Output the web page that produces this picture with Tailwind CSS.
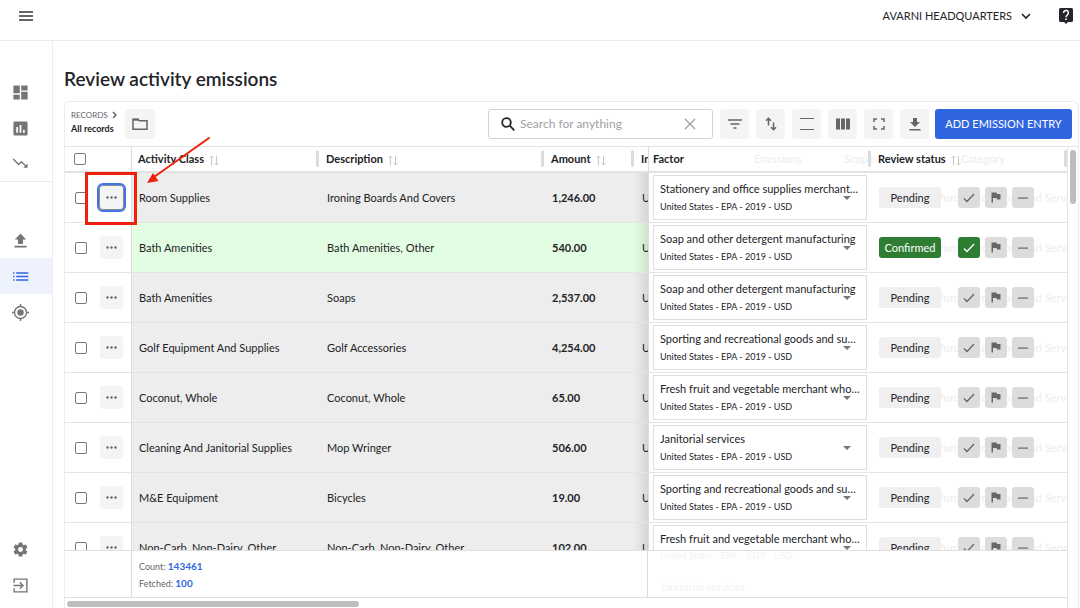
<!DOCTYPE html>
<html lang="en">
<head>
  <meta charset="UTF-8" />
  <title>Review activity emissions</title>
  <script src="https://cdn.jsdelivr.net/npm/@tailwindcss/browser@4"></script>
</head>
<body class="h-screen overflow-hidden flex flex-col bg-white text-[#222326] font-[Lato,'Liberation_Sans',sans-serif]">
  <header class="h-[41px] shrink-0 border-b border-[#ececec] flex items-start justify-between pl-[18px] pr-[6px]">
    <button aria-label="Menu" class="mt-[9px]">
      <svg width="16" height="14" viewBox="0 0 16 14" stroke="#333" stroke-width="1.6"><path d="M1 3h14M1 7h14M1 11h14" /></svg>
    </button>
    <div class="flex items-center mt-[7px]">
      <button class="flex items-center gap-2 text-[11px] leading-[18px]">
        AVARNI HEADQUARTERS
        <svg width="12" height="12" viewBox="0 0 12 12" fill="none" stroke="#222326" stroke-width="1.6"><path d="M2 4l4 4 4-4" /></svg>
      </button>
      <button aria-label="Help" class="ml-[26px]">
        <svg width="16" height="18" viewBox="0 0 16 18"><path d="M2.500 1h11a1.500 1.500 0 0 1 1.500 1.500v11a1.500 1.500 0 0 1-1.500 1.500H10l-2 2-2-2H2.500A1.500 1.500 0 0 1 1 13.500v-11A1.500 1.500 0 0 1 2.500 1z" fill="#26262c" /><path d="M5.600 5.900a2.400 2.400 0 1 1 4.300 1.400C9 8.300 8 8.700 8 10.300" fill="none" stroke="#fff" stroke-width="1.500" /><path d="M7.200 11.600h1.600v1.500H7.200z" fill="#fff" /></svg>
      </button>
    </div>
  </header>

  <div class="flex flex-1 min-h-0">
    <nav class="w-[53px] shrink-0 border-r border-[#ececec] flex flex-col pt-[33px] pb-[5px] text-[#757575]">
      <a href="#" aria-label="Dashboard" class="h-9 pl-3 flex items-center">
        <svg width="17" height="17" viewBox="0 0 24 24" fill="currentColor"><path d="M2 2h9v11H2zM13 2h9v7h-9zM13 11h9v11h-9zM2 15h9v7H2z" /></svg>
      </a>
      <a href="#" aria-label="Reports" class="h-9 pl-3 flex items-center">
        <svg width="17" height="17" viewBox="0 0 24 24" fill="currentColor"><path fill-rule="evenodd" d="M4 2h16a2 2 0 0 1 2 2v16a2 2 0 0 1-2 2H4a2 2 0 0 1-2-2V4c0-1.100.9-2 2-2zM6 10v8h2.500v-8zM10.700 7v11h2.500V7zM15.500 14v4H18v-4z" /></svg>
      </a>
      <a href="#" aria-label="Trends" class="h-9 pl-3 flex items-center border-b border-[#ececec]">
        <svg width="17" height="17" viewBox="0 0 24 24" fill="currentColor"><path d="M16 18l2.300-2.300-4.900-4.900-4 4L1 6.400 2.400 5l7 7 4-4 6.300 6.300L22 12v6z" /></svg>
      </a>
      <a href="#" aria-label="Upload" class="mt-10 h-9 pl-3 flex items-center">
        <svg width="17" height="17" viewBox="0 0 24 24" fill="currentColor"><path d="M8.500 17v-6.500H4L12 2l8 8.500h-4.500V17zM3.500 19.500h17v2.300h-17z" /></svg>
      </a>
      <a href="#" aria-label="Records" class="h-9 pl-3 flex items-center bg-[#eef2fd] text-[#2f66e0]">
        <svg width="17" height="17" viewBox="0 0 24 24" fill="currentColor"><path d="M1.500 6h2v2h-2zM1.500 11h2v2h-2zM1.500 16h2v2h-2zM6 6h17v2H6zM6 11h17v2H6zM6 16h17v2H6z" /></svg>
      </a>
      <a href="#" aria-label="Targets" class="h-9 pl-3 flex items-center">
        <svg width="17" height="17" viewBox="0 0 24 24" fill="none" stroke="currentColor" stroke-width="2"><circle cx="12" cy="12" r="8.500" /><circle cx="12" cy="12" r="4.500" fill="currentColor" stroke="none" /><path d="M12 0v4M12 20v4M0 12h4M20 12h4" /></svg>
      </a>
      <a href="#" aria-label="Settings" class="mt-auto h-9 pl-3 flex items-center">
        <svg width="17" height="17" viewBox="0 0 24 24" fill="currentColor"><path d="M19.430 12.980c.04-.32.07-.64.07-.98s-.03-.66-.07-.98l2.110-1.650c.19-.15.24-.42.12-.64l-2-3.460c-.12-.22-.39-.3-.61-.22l-2.490 1c-.52-.4-1.080-.73-1.690-.98l-.38-2.650C14.460 2.180 14.250 2 14 2h-4c-.25 0-.46.18-.49.42l-.38 2.650c-.61.25-1.170.59-1.690.98l-2.490-1c-.23-.09-.49 0-.61.22l-2 3.460c-.13.22-.07.49.12.64l2.110 1.650c-.04.32-.07.65-.07.98s.03.66.07.98l-2.110 1.650c-.19.15-.24.42-.12.64l2 3.460c.12.22.39.3.61.22l2.490-1c.52.4 1.080.73 1.690.98l.38 2.650c.03.24.24.42.49.42h4c.25 0 .46-.18.49-.42l.38-2.650c.61-.25 1.170-.59 1.690-.98l2.490 1c.23.09.49 0 .61-.22l2-3.460c.12-.22.07-.49-.12-.64zM12 15.500a3.500 3.500 0 1 1 0-7 3.500 3.500 0 0 1 0 7z" /></svg>
      </a>
      <a href="#" aria-label="Log out" class="h-9 pl-3 flex items-center">
        <svg width="17" height="17" viewBox="0 0 24 24" fill="none" stroke="currentColor" stroke-width="2"><path d="M3 8V3h18v18H3v-5M2 12h13M11 7.500l4.500 4.500-4.500 4.500" /></svg>
      </a>
    </nav>

    <main class="flex-1 min-w-0 flex flex-col pl-[11px] pr-px pt-6">
      <h1 class="text-[19px] leading-7 mb-2 font-semibold">Review activity emissions</h1>

      <section class="relative flex-1 min-h-0 flex flex-col border border-b-0 border-[#ececec] rounded-t-md">
        <div class="h-[44px] shrink-0 flex items-center px-[6px] text-[#666]">
          <div class="w-[54px] pb-1 whitespace-nowrap">
            <a href="#" class="flex items-center gap-1 text-[8px] leading-[14px]">RECORDS
              <svg width="5" height="8" viewBox="0 0 5 8" fill="none" stroke="#555" stroke-width="1.300"><path d="M1 1l3 3-3 3" /></svg>
            </a>
            <p class="text-[9px] leading-[14px] font-bold text-[#222326]">All records</p>
          </div>
          <button aria-label="Folders" class="size-[30px] rounded bg-[#f3f4f4] grid place-items-center">
            <svg width="16" height="14" viewBox="0 0 16 14" fill="none" stroke="currentColor" stroke-width="1.500"><path d="M1 2.200h5l1.300 1.500H15v8.500H1z" /><path d="M1 2.700h5.500" stroke-width="2" /></svg>
          </button>

          <div class="ml-auto mr-[7px] w-[225px] h-[30px] border border-[#d2d2d2] rounded-[3px] flex items-center pl-3 pr-4">
            <svg width="14" height="14" viewBox="0 0 14 14" fill="none" stroke="#222" stroke-width="1.800"><circle cx="5.500" cy="5.500" r="4.300" /><path d="M8.700 8.700l4.600 4.600" /></svg>
            <input type="text" aria-label="Search" placeholder="Search for anything" class="flex-1 min-w-0 ml-[5px] text-[12px] leading-4 outline-none placeholder:text-[#a0a0a0]" />
            <button aria-label="Clear search"><svg width="12" height="12" viewBox="0 0 12 12" stroke="#a0a0a0" stroke-width="1.300"><path d="M1 1l10 10M11 1L1 11" /></svg></button>
          </div>

          <div class="flex gap-[7px]">
            <button aria-label="Filter" class="w-[29px] h-[30px] rounded-[3px] bg-[#f3f4f4] grid place-items-center">
              <svg width="14" height="12" viewBox="0 0 14 12" stroke="currentColor" stroke-width="1.500"><path d="M0 2h14M2.500 6h9M5.500 10h3" /></svg>
            </button>
            <button aria-label="Sort" class="w-[29px] h-[30px] rounded-[3px] bg-[#f3f4f4] grid place-items-center">
              <svg width="12" height="14" viewBox="0 0 12 14" fill="none" stroke="currentColor" stroke-width="1.500"><path d="M3.500 8.500v-7M1 3.700l2.500-2.500L6 3.700M8.500 5.500v7M6 10.300l2.500 2.500 2.500-2.500" /></svg>
            </button>
            <button aria-label="Row height" class="w-[29px] h-[30px] rounded-[3px] bg-[#f3f4f4] grid place-items-center">
              <svg width="14" height="14" viewBox="0 0 14 14" stroke="currentColor" stroke-width="1.200"><path d="M0 1.500h14M0 12.500h14" /></svg>
            </button>
            <button aria-label="Columns" class="w-[29px] h-[30px] rounded-[3px] bg-[#f3f4f4] grid place-items-center">
              <svg width="14" height="12" viewBox="0 0 14 12" fill="currentColor"><path d="M0 .5h4v11H0zM5 .5h4v11H5zM10 .5h4v11h-4z" /></svg>
            </button>
            <button aria-label="Full screen" class="w-[29px] h-[30px] rounded-[3px] bg-[#f3f4f4] grid place-items-center">
              <svg width="12" height="12" viewBox="0 0 12 12" fill="none" stroke="currentColor" stroke-width="1.500"><path d="M1 4V1h3M8 1h3v3M11 8v3H8M4 11H1V8" /></svg>
            </button>
            <button aria-label="Download" class="w-[29px] h-[30px] rounded-[3px] bg-[#f3f4f4] grid place-items-center">
              <svg width="12" height="14" viewBox="0 0 12 14" fill="currentColor"><path d="M4 1h4v4h3L6 10 1 5h3zM.5 12h11v1.500H.5z" /></svg>
            </button>
          </div>
          <button class="ml-[6px] w-[137px] h-[30px] rounded-[3px] bg-[#2f66e0] text-white text-[11px] whitespace-nowrap">ADD EMISSION ENTRY</button>
        </div>

        <div class="flex flex-1 min-h-0 border-t border-[#e4e4e4]">
          <div class="flex-1 min-w-0 flex flex-col">
            <div class="flex-1 min-h-0 overflow-hidden">
              <table class="w-full table-fixed border-separate border-spacing-0 text-[11px] leading-4 text-left">
                <colgroup>
                  <col class="w-[66px]" /><col class="w-[188px]" /><col /><col class="w-[90px]" /><col class="w-[14px]" /><col class="w-[223px]" /><col class="w-[196px]" />
                </colgroup>
                <thead id="head"></thead>
                <tbody id="rows"></tbody>
              </table>
            </div>
            <footer class="h-12 shrink-0 flex border-y border-[#e0e0e0] text-[9px] leading-4 text-[#666]">
              <div class="w-[66px]"></div>
              <div class="flex-1 border-l border-[#dcdcdc] pl-[7px] pt-[7px]">
                <p>Count: <b class="text-[10px] text-[#2f66e0]">143461</b></p>
                <p>Fetched: <b class="text-[10px] text-[#2f66e0]">100</b></p>
              </div>
              <div aria-hidden="true" class="w-[420px] border-l border-[#dcdcdc] pl-3 text-[#f3f3f3] flex flex-col justify-between pb-[2px]">
                <span class="leading-[10px]">United States - EPA - 2019 - USD</span>
                <span class="text-[11px]">Janitorial services</span>
              </div>
            </footer>
            <div class="h-[10px] shrink-0 pt-[3px] pl-[2px]"><div class="w-[292px] h-[6px] rounded-full bg-[#bdbdbd]"></div></div>
          </div>
          <div class="w-[11px] border-l border-[#e4e4e4] pl-[2px] pt-[3px]"><div class="w-[6px] h-[54px] rounded-full bg-[#bdbdbd]"></div></div>
        </div>

        <!-- callout on the first row's menu button -->
        <div class="absolute left-[20px] top-[70px] w-[52px] h-[53px] border-3 border-[#ee220c] pointer-events-none"></div>
        <svg class="absolute left-[80px] top-[32px] pointer-events-none" width="68" height="52" viewBox="0 0 68 52"><path d="M64 4L9 43" stroke="#ee220c" stroke-width="2" stroke-linecap="round" /><path d="M2 49l6-10 5.500 8z" fill="#ee220c" /></svg>
      </section>
    </main>
  </div>

  <script>
    const rows = [
      ["Room Supplies", "Ironing Boards And Covers", "1,246.00", "Stationery and office supplies merchant wholesalers"],
      ["Bath Amenities", "Bath Amenities, Other", "540.00", "Soap and other detergent manufacturing"],
      ["Bath Amenities", "Soaps", "2,537.00", "Soap and other detergent manufacturing"],
      ["Golf Equipment And Supplies", "Golf Accessories", "4,254.00", "Sporting and recreational goods and supplies merchant wholesalers"],
      ["Coconut, Whole", "Coconut, Whole", "65.00", "Fresh fruit and vegetable merchant wholesalers"],
      ["Cleaning And Janitorial Supplies", "Mop Wringer", "506.00", "Janitorial services"],
      ["M&amp;E Equipment", "Bicycles", "19.00", "Sporting and recreational goods and supplies merchant wholesalers"],
      ["Non-Carb, Non-Dairy, Other", "Non-Carb, Non-Dairy, Other", "102.00", "Fresh fruit and vegetable merchant wholesalers"],
    ];

    const sort = `<svg class="inline ml-[5px]" width="10" height="11" viewBox="0 0 10 11" fill="none" stroke="#c8c8c8"><path d="M2.500 10.500v-9M.5 3l2-2 2 2M7.500.5v9M5.500 8l2 2 2-2" /></svg>`;
    const grip = `<i class="absolute right-0 top-[3px] w-[3px] h-[17px] rounded bg-[#dcdcdc]"></i>`;
    const th = "relative h-[26px] border-b-2 border-[#e2e2e2] whitespace-nowrap font-bold";
    const check = "block size-3 appearance-none border-[1.5px] border-[#777] rounded-[2px] bg-white";

    document.getElementById("head").innerHTML = `
      <tr>
        <th class="${th} pl-[9px]"><input type="checkbox" aria-label="Select all" class="${check}" /></th>
        <th class="${th} border-l border-l-[#dcdcdc] pl-[6px]">Activity Class${sort}${grip}</th>
        <th class="${th} pl-[7px]">Description${sort}${grip}</th>
        <th class="${th} pl-[7px]">Amount${sort}${grip}</th>
        <th class="${th} pl-[7px] overflow-hidden">Input</th>
        <th class="${th} border-l border-l-[#dcdcdc] pl-1">Factor
          <span aria-hidden="true" class="absolute left-[105px] font-normal text-[#ececec]">Emissions</span>
          <span aria-hidden="true" class="absolute left-[195px] font-normal text-[#ececec]">Scope</span>${grip}</th>
        <th class="${th} pl-[7px]">Review status${sort}
          <span aria-hidden="true" class="absolute left-[90px] font-normal text-[#ececec]">Category</span>${grip}</th>
      </tr>`;

    document.getElementById("rows").innerHTML = rows.map(([name, desc, amount, factor], i) => {
      const ok = i === 1;
      const td = `h-[50px] border-b border-[#e4e4e4] whitespace-nowrap ${ok ? "bg-[#e3fde3]" : "bg-[#ededed]"}`;
      const plain = "relative h-[50px] border-b border-[#e4e4e4]";
      const small = "relative w-[22px] h-[21px] rounded-[3px] bg-[#dcdcdc] text-[#666] grid place-items-center";
      return `
      <tr>
        <td class="${plain} pl-[10px]"><div class="flex items-center gap-[13px]">
          <input type="checkbox" aria-label="Select ${name}" class="${check}" />
          <button aria-label="Row menu" class="size-[23px] rounded-[3px] bg-[#f3f4f4] grid place-items-center ${i === 0 ? "ring-1 ring-[#8b8b8b] outline-2 outline-offset-1 outline-[#3f74e8]" : ""}">
            <svg width="11" height="3" viewBox="0 0 11 3" fill="#666"><circle cx="1.500" cy="1.500" r="1.200" /><circle cx="5.500" cy="1.500" r="1.200" /><circle cx="9.500" cy="1.500" r="1.200" /></svg>
          </button>
        </div></td>
        <td class="${td} border-l border-l-[#dcdcdc] pl-[7px]">${name}</td>
        <td class="${td} pl-[8px]">${desc}</td>
        <td class="${td} pl-[8px] font-bold">${amount}</td>
        <td class="${td} pl-[8px] overflow-hidden bg-linear-to-r from-black/0 to-black/10">USD</td>
        <td class="${plain} border-l border-l-[#dcdcdc] pl-1">
          <div class="relative w-[214px] h-[45px] border border-[#dedede] bg-white pl-[6px] pt-[5px]">
            <select aria-label="Factor for ${name}" class="block w-[200px] h-4 appearance-none truncate"><option>${factor}</option></select>
            <p class="mt-[3px] text-[9px] leading-[14px]">United States - EPA - 2019 - USD</p>
            <svg class="absolute right-[15px] top-[20px] pointer-events-none" width="8" height="4" viewBox="0 0 8 4" fill="#777"><path d="M0 0h8L4 4z" /></svg>
          </div>
        </td>
        <td class="${plain} overflow-hidden pl-[8px]">
          <span aria-hidden="true" class="absolute left-[66px] top-[17px] whitespace-nowrap text-[#ededed]">Purchased Goods and Services</span>
          <div class="relative flex items-center gap-[5px]">
            <span class="w-[62px] h-[21px] mr-3 rounded-[3px] grid place-items-center ${ok ? "bg-[#2e7d32] text-white" : "bg-[#efefef]"}">${ok ? "Confirmed" : "Pending"}</span>
            <button aria-label="Confirm" class="${ok ? "relative w-[22px] h-[21px] rounded-[3px] bg-[#2e7d32] text-white grid place-items-center" : small}">
              <svg width="12" height="10" viewBox="0 0 12 10" fill="none" stroke="currentColor" stroke-width="1.300"><path d="M1 5.500L4 8.500 11 1" /></svg>
            </button>
            <button aria-label="Flag" class="${small}">
              <svg width="10" height="11" viewBox="0 0 10 11" fill="currentColor"><path d="M.5.500h5L6 2h3.500v5.500H6L5.500 6H2v4.500H.500z" /></svg>
            </button>
            <button aria-label="Exclude" class="${small}">
              <svg width="10" height="2" viewBox="0 0 10 2" fill="currentColor"><path d="M0 .5h10v1.200H0z" /></svg>
            </button>
          </div>
        </td>
      </tr>`;
    }).join("");
  </script>
</body>
</html>
